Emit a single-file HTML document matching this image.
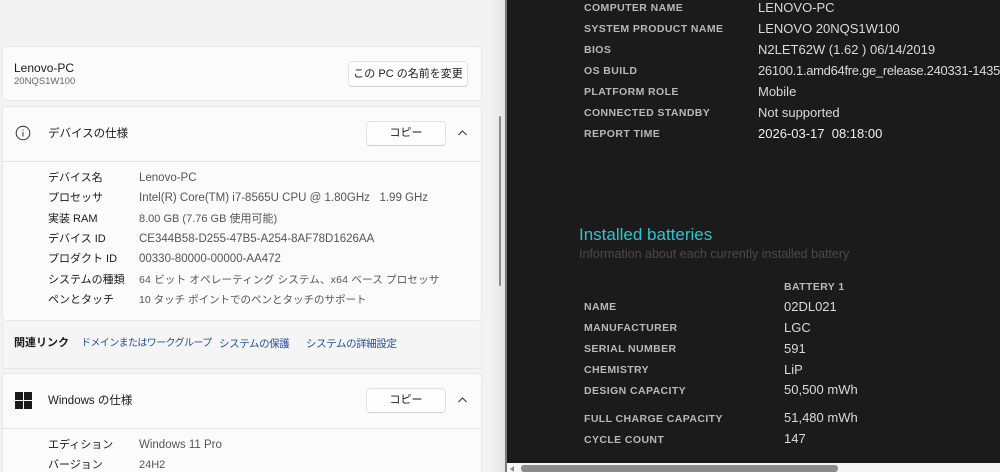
<!DOCTYPE html>
<html><head><meta charset="utf-8"><style>
*{margin:0;padding:0;box-sizing:border-box}
html,body{width:1000px;height:472px;overflow:hidden}
body{position:relative;background:#f3f3f3;font-family:"Liberation Sans","Noto Sans CJK JP",sans-serif}
.a{position:absolute;white-space:nowrap;line-height:14px}
.card{position:absolute;left:2px;width:480px;background:#fbfbfb;border:1px solid #e8e8e8;border-radius:4px}
.btn{position:absolute;background:#fefefe;border:1px solid #e2e2e2;border-bottom-color:#d0d0d0;border-radius:4px;font-size:11px;color:#1a1a1a;text-align:center;white-space:nowrap}
.k{font-size:11px;color:#1a1a1a}
.v{font-size:11px;color:#555}
.lk{font-size:10.5px;color:#1f4e9a;letter-spacing:-0.4px}
.dark{position:absolute;left:507px;top:0;width:493px;height:463px;background:#1b1b1b}
.l{position:absolute;left:584px;font-size:10.5px;font-weight:bold;color:#b8b8b8;letter-spacing:.4px;white-space:nowrap}
.r{position:absolute;left:758px;font-size:13px;color:#dadada;white-space:nowrap}
</style></head><body>
<div class="card" style="top:46px;height:55px"></div>
<div class="a" style="left:14px;top:61px;font-size:12px;color:#1a1a1a">Lenovo-PC</div>
<div class="a" style="left:14px;top:75px;font-size:9.5px;color:#666">20NQS1W100</div>
<div class="btn" style="left:348px;top:61px;width:120px;height:26px;line-height:24px">この PC の名前を変更</div>

<div class="card" style="top:106px;height:215px"></div>
<div style="position:absolute;left:3px;top:161px;width:478px;height:1px;background:#e6e6e6"></div>
<svg class="a" style="left:15px;top:125px" width="16" height="16" viewBox="0 0 16 16"><circle cx="8" cy="8" r="6.8" fill="none" stroke="#333" stroke-width="1"/><rect x="7.5" y="7" width="1" height="4.5" fill="#333"/><rect x="7.5" y="4.6" width="1" height="1.2" fill="#333"/></svg>
<div class="a" style="left:48px;top:127px;font-size:11.5px;color:#1a1a1a">デバイスの仕様</div>
<div class="btn" style="left:366px;top:121px;width:80px;height:25px;line-height:23px">コピー</div>
<svg class="a" style="left:457px;top:129px" width="11" height="8" viewBox="0 0 11 8"><path d="M1.5 6 L5.5 2 L9.5 6" fill="none" stroke="#333" stroke-width="1"/></svg>

<div class="a k" style="left:48px;top:171px">デバイス名</div><div class="a v" style="left:139px;top:171px;font-size:11.5px">Lenovo-PC</div>
<div class="a k" style="left:48px;top:191px">プロセッサ</div><div class="a v" style="left:139px;top:191px;font-size:11.5px">Intel(R) Core(TM) i7-8565U CPU @ 1.80GHz&nbsp;&nbsp; 1.99 GHz</div>
<div class="a k" style="left:48px;top:212px">実装 RAM</div><div class="a v" style="left:139px;top:212px">8.00 GB (7.76 GB 使用可能)</div>
<div class="a k" style="left:48px;top:232px">デバイス ID</div><div class="a v" style="left:139px;top:232px;font-size:11.5px">CE344B58-D255-47B5-A254-8AF78D1626AA</div>
<div class="a k" style="left:48px;top:252px">プロダクト ID</div><div class="a v" style="left:139px;top:252px;font-size:11.5px">00330-80000-00000-AA472</div>
<div class="a k" style="left:48px;top:273px">システムの種類</div><div class="a v" style="left:139px;top:273px;font-size:10.5px;letter-spacing:.2px">64 ビット オペレーティング システム、x64 ベース プロセッサ</div>
<div class="a k" style="left:48px;top:293px">ペンとタッチ</div><div class="a v" style="left:139px;top:293px;font-size:10.5px">10 タッチ ポイントでのペンとタッチのサポート</div>

<div style="position:absolute;left:2px;top:321px;width:480px;height:48px;background:#f5f5f5;border:1px solid #e8e8e8;border-top:none"></div>
<div class="a" style="left:14px;top:336px;font-size:11px;color:#1a1a1a;font-weight:bold">関連リンク</div>
<div class="a lk" style="left:81px;top:337px;font-size:10px;letter-spacing:-0.6px">ドメインまたはワークグループ</div>
<div class="a lk" style="left:219px;top:337px">システムの保護</div>
<div class="a lk" style="left:306px;top:337px">システムの詳細設定</div>

<div class="card" style="top:373px;height:110px"></div>
<div style="position:absolute;left:3px;top:428px;width:478px;height:1px;background:#e6e6e6"></div>
<svg class="a" style="left:15px;top:392px" width="17" height="17" viewBox="0 0 17 17" fill="#1a1a1a"><rect x="0" y="0" width="8" height="8"/><rect x="9" y="0" width="8" height="8"/><rect x="0" y="9" width="8" height="8"/><rect x="9" y="9" width="8" height="8"/></svg>
<div class="a" style="left:48px;top:394px;font-size:11.5px;color:#1a1a1a">Windows の仕様</div>
<div class="btn" style="left:366px;top:388px;width:80px;height:25px;line-height:23px">コピー</div>
<svg class="a" style="left:457px;top:396px" width="11" height="8" viewBox="0 0 11 8"><path d="M1.5 6 L5.5 2 L9.5 6" fill="none" stroke="#333" stroke-width="1"/></svg>
<div class="a k" style="left:48px;top:438px">エディション</div><div class="a v" style="left:139px;top:438px;font-size:11.5px">Windows 11 Pro</div>
<div class="a k" style="left:48px;top:458px">バージョン</div><div class="a v" style="left:139px;top:458px">24H2</div>

<div style="position:absolute;left:488px;top:0;width:17px;height:472px;background:linear-gradient(90deg,#f3f3f3,#e4e4e4)"></div>
<div style="position:absolute;left:499px;top:116px;width:2px;height:170px;background:#8a8a8a;border-radius:1px"></div>
<div style="position:absolute;left:505px;top:0;width:2px;height:472px;background:#7a7a7a"></div>

<div class="dark"></div>
<div class="l" style="top:2px">COMPUTER NAME</div><div class="r" style="top:0px">LENOVO-PC</div>
<div class="l" style="top:23px">SYSTEM PRODUCT NAME</div><div class="r" style="top:21px">LENOVO 20NQS1W100</div>
<div class="l" style="top:44px">BIOS</div><div class="r" style="top:42px">N2LET62W (1.62 ) 06/14/2019</div>
<div class="l" style="top:65px">OS BUILD</div><div class="r" style="top:63px;letter-spacing:-0.3px">26100.1.amd64fre.ge_release.240331-1435</div>
<div class="l" style="top:86px">PLATFORM ROLE</div><div class="r" style="top:84px">Mobile</div>
<div class="l" style="top:107px">CONNECTED STANDBY</div><div class="r" style="top:105px">Not supported</div>
<div class="l" style="top:128px">REPORT TIME</div><div class="r" style="top:126px;color:#f0f0f0">2026-03-17&nbsp; 08:18:00</div>

<div class="a" style="left:579px;top:225px;font-size:17px;line-height:20px;color:#2ec4cc">Installed batteries</div>
<div class="a" style="left:579px;top:247px;font-size:12.5px;color:#4a4a4a">Information about each currently installed battery</div>
<div class="l" style="left:784px;top:281px">BATTERY 1</div>
<div class="l" style="top:301px">NAME</div><div class="r" style="left:784px;top:299px">02DL021</div>
<div class="l" style="top:322px">MANUFACTURER</div><div class="r" style="left:784px;top:320px">LGC</div>
<div class="l" style="top:343px">SERIAL NUMBER</div><div class="r" style="left:784px;top:341px">591</div>
<div class="l" style="top:364px">CHEMISTRY</div><div class="r" style="left:784px;top:362px">LiP</div>
<div class="l" style="top:385px">DESIGN CAPACITY</div><div class="r" style="left:784px;top:382px">50,500 mWh</div>
<div class="l" style="top:413px">FULL CHARGE CAPACITY</div><div class="r" style="left:784px;top:410px">51,480 mWh</div>
<div class="l" style="top:434px">CYCLE COUNT</div><div class="r" style="left:784px;top:431px">147</div>

<div style="position:absolute;left:507px;top:463px;width:493px;height:9px;background:#f4f4f4"></div>
<div style="position:absolute;left:510px;top:466px;width:0;height:0;border-right:4px solid #888;border-top:3px solid transparent;border-bottom:3px solid transparent"></div>
<div style="position:absolute;left:521px;top:465px;width:317px;height:7px;background:#8c8c8c;border-radius:3px"></div>
</body></html>
